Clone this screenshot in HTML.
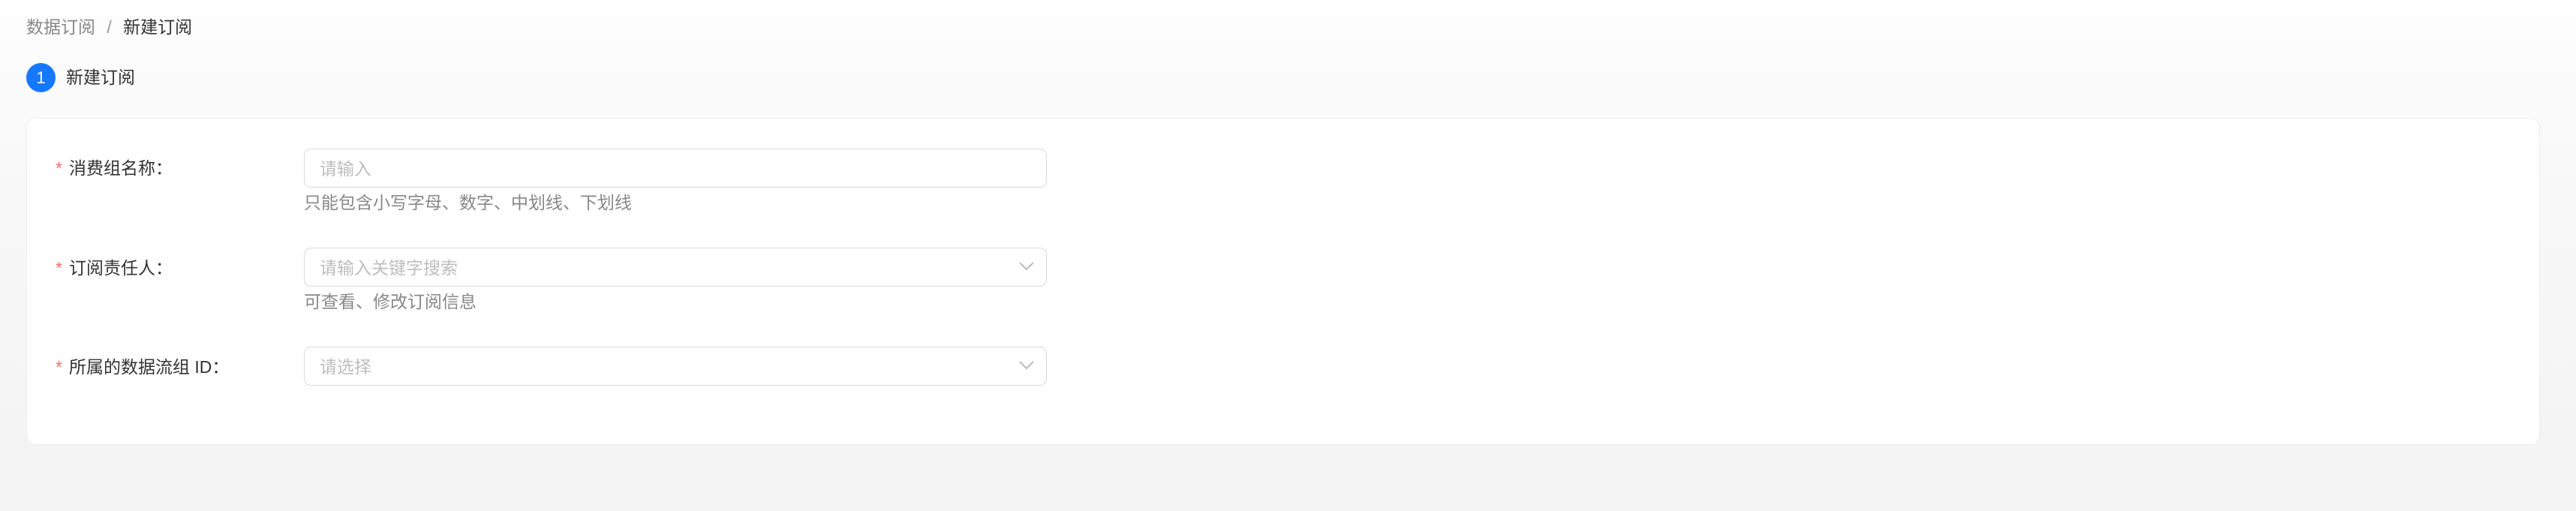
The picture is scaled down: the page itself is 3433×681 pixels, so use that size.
<!DOCTYPE html>
<html><head><meta charset="utf-8"><style>
*{margin:0;padding:0;box-sizing:border-box}
body{width:3433px;height:681px;overflow:hidden;background:linear-gradient(#fefefe 0,#f9f9f9 200px,#f3f3f3 681px);font-family:"Liberation Sans","Noto Sans CJK SC",sans-serif;font-size:23px;position:relative;color:#333}
.a{position:absolute;white-space:nowrap;line-height:1}
.card{position:absolute;left:35px;top:157px;width:3350px;height:436px;background:#fff;border:1px solid #eee;border-radius:13px}
.in{position:absolute;left:405px;width:990px;height:52px;border:1.5px solid #d9d9d9;border-radius:9px;background:#fff}
.ph{position:absolute;left:20px;top:15px;color:#bdbdbd;font-size:23px;line-height:1;white-space:nowrap}
.ch{position:absolute;right:16px;top:15px}
.st{color:#f56c6c;margin-right:9px}
</style></head><body>
<div class="a" style="left:35px;top:25px;color:#888">数据订阅 <span style="margin:0 9px;color:#999">/</span> <span style="color:#333">新建订阅</span></div>
<div style="position:absolute;left:35px;top:84px;width:39px;height:39px;border-radius:50%;background:#1677ff;color:#fff;text-align:center;line-height:39px;font-size:22px">1</div>
<div class="a" style="left:88px;top:92px;color:#333">新建订阅</div>
<div class="card"></div>
<div class="a" style="left:74px;top:213px"><span class="st">*</span>消费组名称：</div>
<div class="in" style="top:198px"><div class="ph">请输入</div></div>
<div class="a" style="left:405px;top:259px;color:#888">只能包含小写字母、数字、中划线、下划线</div>
<div class="a" style="left:74px;top:346px"><span class="st">*</span>订阅责任人：</div>
<div class="in" style="top:330px"><div class="ph">请输入关键字搜索</div><svg class="ch" width="20" height="18" viewBox="0 0 20 18"><path d="M1 4 L10 13 L19 4" fill="none" stroke="#bbb" stroke-width="2"/></svg></div>
<div class="a" style="left:405px;top:391px;color:#888">可查看、修改订阅信息</div>
<div class="a" style="left:74px;top:478px"><span class="st">*</span>所属的数据流组 ID：</div>
<div class="in" style="top:462px"><div class="ph">请选择</div><svg class="ch" width="20" height="18" viewBox="0 0 20 18"><path d="M1 4 L10 13 L19 4" fill="none" stroke="#bbb" stroke-width="2"/></svg></div>
</body></html>
